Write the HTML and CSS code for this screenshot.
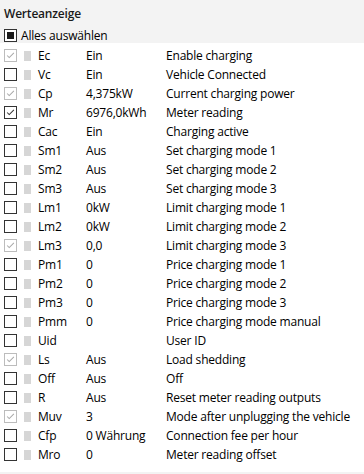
FILE: index.html
```html
<!DOCTYPE html>
<html>
<head>
<meta charset="utf-8">
<link rel="stylesheet" href="styles.css">
</head>
<body>
<div class="top">
  <div class="title">Werteanzeige</div>
  <div class="selall"><span class="cb cb-ind"><span class="ind"></span></span><span>Alles auswählen</span></div>
</div>
<div class="list">
  <div class="row"><span class="cb cb-dis"><svg viewBox="0 0 13 13"><polyline points="2.5,6.5 5,9 10.5,3.5"/></svg></span><span class="sq"></span><span class="c1">Ec</span><span class="c2">Ein</span><span class="c3">Enable charging</span></div>
  <div class="row"><span class="cb"></span><span class="sq"></span><span class="c1">Vc</span><span class="c2">Ein</span><span class="c3">Vehicle Connected</span></div>
  <div class="row"><span class="cb cb-dis"><svg viewBox="0 0 13 13"><polyline points="2.5,6.5 5,9 10.5,3.5"/></svg></span><span class="sq"></span><span class="c1">Cp</span><span class="c2">4,375kW</span><span class="c3">Current charging power</span></div>
  <div class="row"><span class="cb cb-on"><svg viewBox="0 0 13 13"><polyline points="2.5,6.5 5,9 10.5,3.5"/></svg></span><span class="sq"></span><span class="c1">Mr</span><span class="c2">6976,0kWh</span><span class="c3">Meter reading</span></div>
  <div class="row"><span class="cb"></span><span class="sq"></span><span class="c1">Cac</span><span class="c2">Ein</span><span class="c3">Charging active</span></div>
  <div class="row"><span class="cb"></span><span class="sq"></span><span class="c1">Sm1</span><span class="c2">Aus</span><span class="c3">Set charging mode 1</span></div>
  <div class="row"><span class="cb"></span><span class="sq"></span><span class="c1">Sm2</span><span class="c2">Aus</span><span class="c3">Set charging mode 2</span></div>
  <div class="row"><span class="cb"></span><span class="sq"></span><span class="c1">Sm3</span><span class="c2">Aus</span><span class="c3">Set charging mode 3</span></div>
  <div class="row"><span class="cb"></span><span class="sq"></span><span class="c1">Lm1</span><span class="c2">0kW</span><span class="c3">Limit charging mode 1</span></div>
  <div class="row"><span class="cb"></span><span class="sq"></span><span class="c1">Lm2</span><span class="c2">0kW</span><span class="c3">Limit charging mode 2</span></div>
  <div class="row"><span class="cb cb-dis"><svg viewBox="0 0 13 13"><polyline points="2.5,6.5 5,9 10.5,3.5"/></svg></span><span class="sq"></span><span class="c1">Lm3</span><span class="c2">0,0</span><span class="c3">Limit charging mode 3</span></div>
  <div class="row"><span class="cb"></span><span class="sq"></span><span class="c1">Pm1</span><span class="c2">0</span><span class="c3">Price charging mode 1</span></div>
  <div class="row"><span class="cb"></span><span class="sq"></span><span class="c1">Pm2</span><span class="c2">0</span><span class="c3">Price charging mode 2</span></div>
  <div class="row"><span class="cb"></span><span class="sq"></span><span class="c1">Pm3</span><span class="c2">0</span><span class="c3">Price charging mode 3</span></div>
  <div class="row"><span class="cb"></span><span class="sq"></span><span class="c1">Pmm</span><span class="c2">0</span><span class="c3">Price charging mode manual</span></div>
  <div class="row"><span class="cb"></span><span class="sq"></span><span class="c1">Uid</span><span class="c2"></span><span class="c3">User ID</span></div>
  <div class="row"><span class="cb cb-dis"><svg viewBox="0 0 13 13"><polyline points="2.5,6.5 5,9 10.5,3.5"/></svg></span><span class="sq"></span><span class="c1">Ls</span><span class="c2">Aus</span><span class="c3">Load shedding</span></div>
  <div class="row"><span class="cb"></span><span class="sq"></span><span class="c1">Off</span><span class="c2">Aus</span><span class="c3">Off</span></div>
  <div class="row"><span class="cb"></span><span class="sq"></span><span class="c1">R</span><span class="c2">Aus</span><span class="c3">Reset meter reading outputs</span></div>
  <div class="row"><span class="cb cb-dis"><svg viewBox="0 0 13 13"><polyline points="2.5,6.5 5,9 10.5,3.5"/></svg></span><span class="sq"></span><span class="c1">Muv</span><span class="c2">3</span><span class="c3">Mode after unplugging the vehicle</span></div>
  <div class="row"><span class="cb"></span><span class="sq"></span><span class="c1">Cfp</span><span class="c2">0 Währung</span><span class="c3">Connection fee per hour</span></div>
  <div class="row"><span class="cb"></span><span class="sq"></span><span class="c1">Mro</span><span class="c2">0</span><span class="c3">Meter reading offset</span></div>
</div>
<div class="bottom"></div>
</body>
</html>
```
FILE: styles.css
```css
html, body {
  margin: 0;
  padding: 0;
  background: #ffffff;
}
body {
  width: 364px;
  height: 474px;
  overflow: hidden;
  font-family: "Open Sans", "Noto Sans", sans-serif;
  font-size: 12px;
  letter-spacing: -0.2px;
  color: #000;
}
.top {
  background: #f3f3f3;
  height: 43px;
  box-sizing: border-box;
  padding: 5px 0 0 4px;
}
.title {
  font-weight: 600;
  height: 17px;
  line-height: 17px;
  color: #1a1a1a;
}
.selall {
  display: flex;
  align-items: center;
  height: 19px;
  margin-top: 4px;
  gap: 4px;
}
.list {
  height: 429px;
  padding-top: 3px;
  box-sizing: border-box;
}
.row {
  display: flex;
  align-items: center;
  height: 19px;
  padding-left: 4px;
}
.cb {
  width: 13px;
  height: 13px;
  box-sizing: border-box;
  border: 1px solid #333;
  background: #fff;
  flex: none;
  display: flex;
  align-items: center;
  justify-content: center;
}
.cb svg {
  width: 13px;
  height: 13px;
  fill: none;
  stroke-width: 1.2;
}
.cb-dis {
  border-color: #bcbcbc;
}
.cb-dis svg { stroke: #a8a8a8; }
.cb-on svg { stroke: #333; }
.cb-ind .ind {
  width: 7px;
  height: 7px;
  background: #1a1a1a;
}
.sq {
  width: 7px;
  height: 10px;
  background: #d6d6d6;
  margin-left: 7px;
  flex: none;
}
.c1 {
  width: 48px;
  margin-left: 7px;
  flex: none;
}
.c2 {
  width: 80px;
  flex: none;
}
.c3 {
  white-space: nowrap;
}
.bottom {
  background: #f3f3f3;
  height: 2px;
}
```
